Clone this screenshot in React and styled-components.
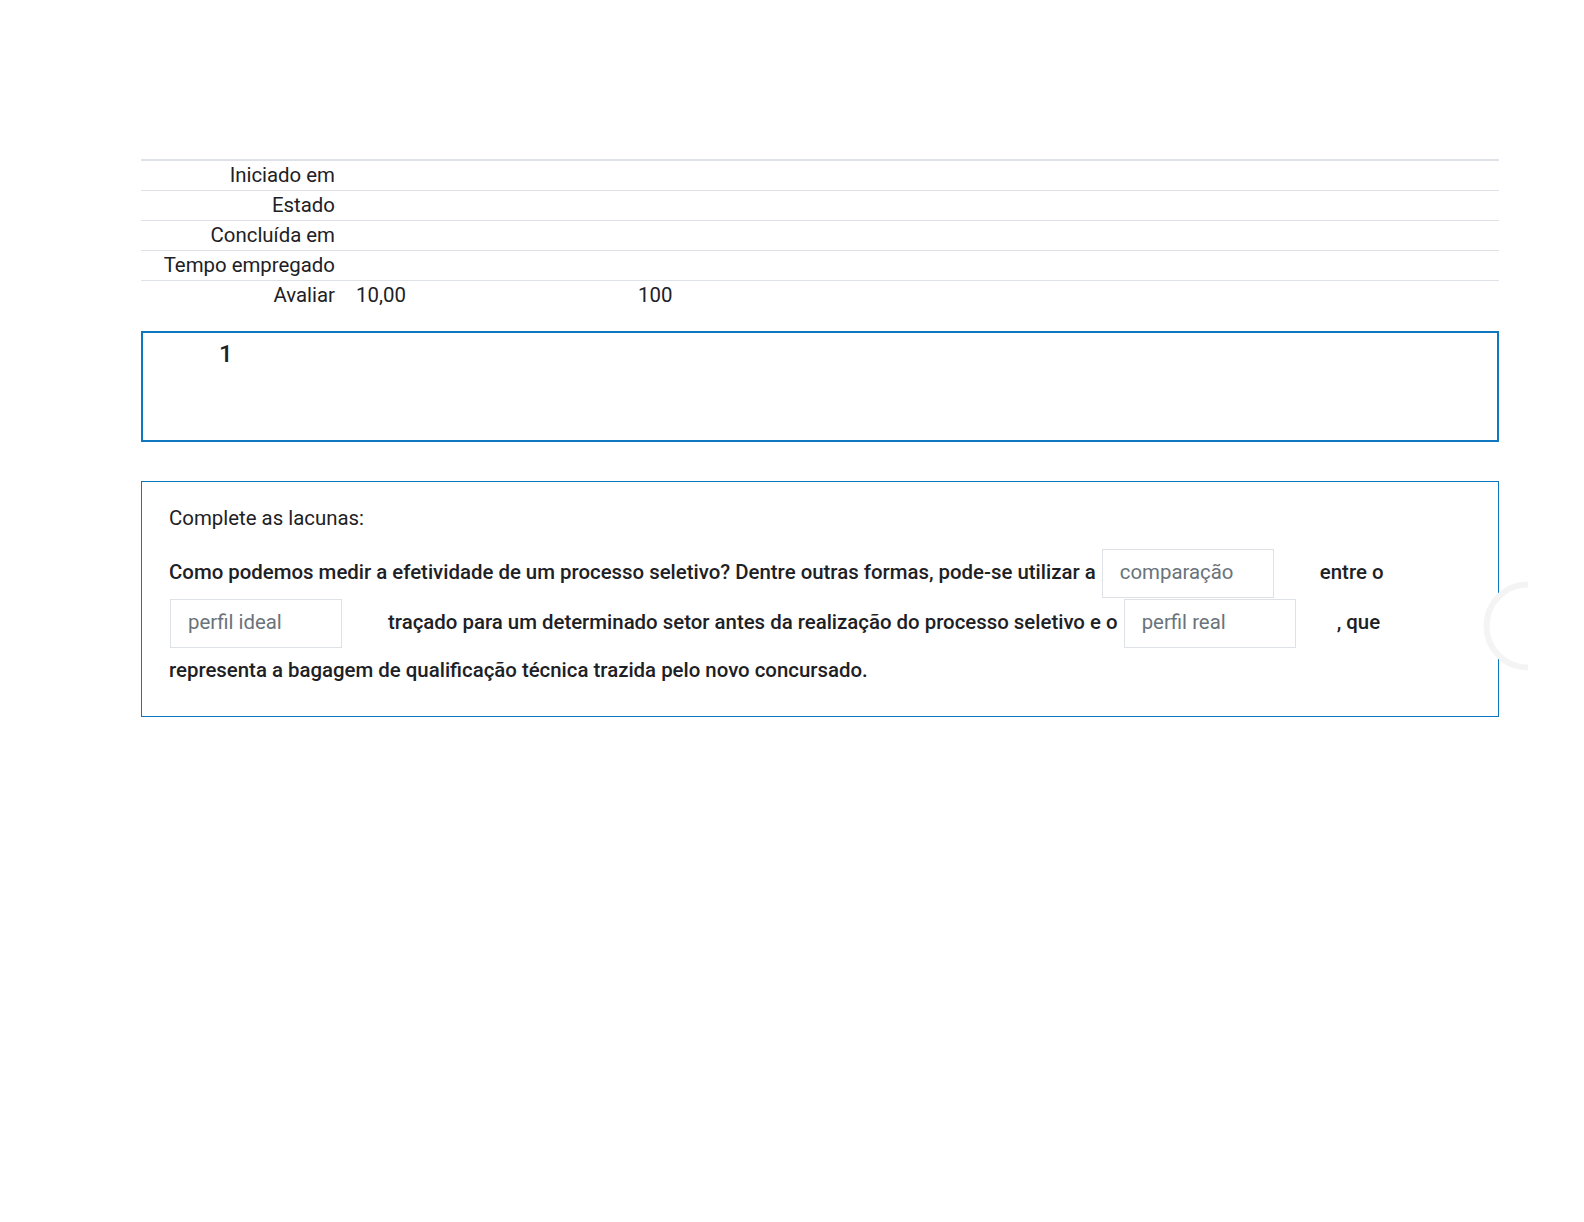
import React from 'react';
import styled, { createGlobalStyle } from 'styled-components';

const GlobalStyle = createGlobalStyle`
  html, body {
    margin: 0;
    padding: 0;
    background: #ffffff;
  }
  body {
    font-family: Roboto, 'Liberation Sans', sans-serif;
    color: #1d2125;
  }
`;

const Page = styled.div`
  position: relative;
  width: 1584px;
  min-height: 1222px;
  padding: 159px 0 0 141px;
  box-sizing: border-box;
  overflow: hidden;
`;

const Content = styled.div`
  width: 1358px;
`;

const SummaryTable = styled.table`
  width: 100%;
  border-collapse: collapse;
  border-top: 2px solid #dee2e6;
  font-size: 20.4px;
`;

const Row = styled.tr`
  border-top: ${p => (p.first ? 'none' : '1px solid #dee2e6')};
`;

const Label = styled.th`
  width: 194px;
  text-align: right;
  font-weight: 400;
  padding: 3px 0;
  height: 23px;
  line-height: 23px;
  white-space: nowrap;
`;

const Cell = styled.td`
  padding: 3px 0 3px 21px;
  height: 23px;
  line-height: 23px;
  font-weight: 400;
`;

const Score = styled.span`
  display: inline-block;
  width: 282px;
`;

const InfoBox = styled.div`
  margin-top: 21px;
  height: 111px;
  border: 2px solid #0f77c0;
  box-sizing: border-box;
  padding: 7px 0 0 76px;
`;

const QNumber = styled.div`
  font-size: 24px;
  line-height: 28px;
  font-weight: 500;
`;

const QuestionBox = styled.div`
  margin-top: 39px;
  border: 1px solid #0f77c0;
  box-sizing: border-box;
  padding: 23px 26px 24px 27px;
`;

const Prompt = styled.p`
  margin: 0 0 18px 0;
  font-size: 20.4px;
  font-weight: 400;
  line-height: 26px;
`;

const Question = styled.p`
  margin: 0;
  font-size: 20.4px;
  font-weight: 500;
  line-height: 43px;
  max-width: 1230px;
`;

const Blank = styled.span`
  display: inline-block;
  vertical-align: middle;
  width: 172px;
  height: 49px;
  box-sizing: border-box;
  border: 1px solid #dee2e6;
  padding: 0 17px;
  margin: 0 ${p => p.after ?? 41}px 1px 1px;
  font-size: 20.4px;
  font-weight: 400;
  line-height: 45px;
  color: #6a737b;
  background: #fff;
`;

const Spinner = styled.svg`
  position: absolute;
  left: 1483px;
  top: 581px;
`;

const rows = ['Iniciado em', 'Estado', 'Concluída em', 'Tempo empregado'];

const App = () => {
  return (
    <>
      <GlobalStyle />
      <Page>
        <Content>
          <SummaryTable>
            <tbody>
              {rows.map((label, i) => (
                <Row key={label} first={i === 0}>
                  <Label>{label}</Label>
                  <Cell />
                </Row>
              ))}
              <Row>
                <Label>Avaliar</Label>
                <Cell>
                  <Score>10,00</Score>100
                </Cell>
              </Row>
            </tbody>
          </SummaryTable>

          <InfoBox>
            <QNumber>1</QNumber>
          </InfoBox>

          <QuestionBox>
            <Prompt>Complete as lacunas:</Prompt>
            <Question>
              Como podemos medir a efetividade de um processo seletivo? Dentre outras formas, pode-se utilizar a{' '}
              <Blank>comparação</Blank> entre o <Blank>perfil ideal</Blank> traçado para um determinado setor
              antes da realização do processo seletivo e o <Blank>perfil real</Blank>, que representa a bagagem de
              qualificação técnica trazida pelo novo concursado.
            </Question>
          </QuestionBox>
        </Content>

        <Spinner width="45" height="90" viewBox="0 0 45 90">
          <circle cx="45" cy="45" r="41.5" fill="#ffffff" stroke="#f4f4f4" strokeWidth="6" />
        </Spinner>
      </Page>
    </>
  );
};

export default App;
